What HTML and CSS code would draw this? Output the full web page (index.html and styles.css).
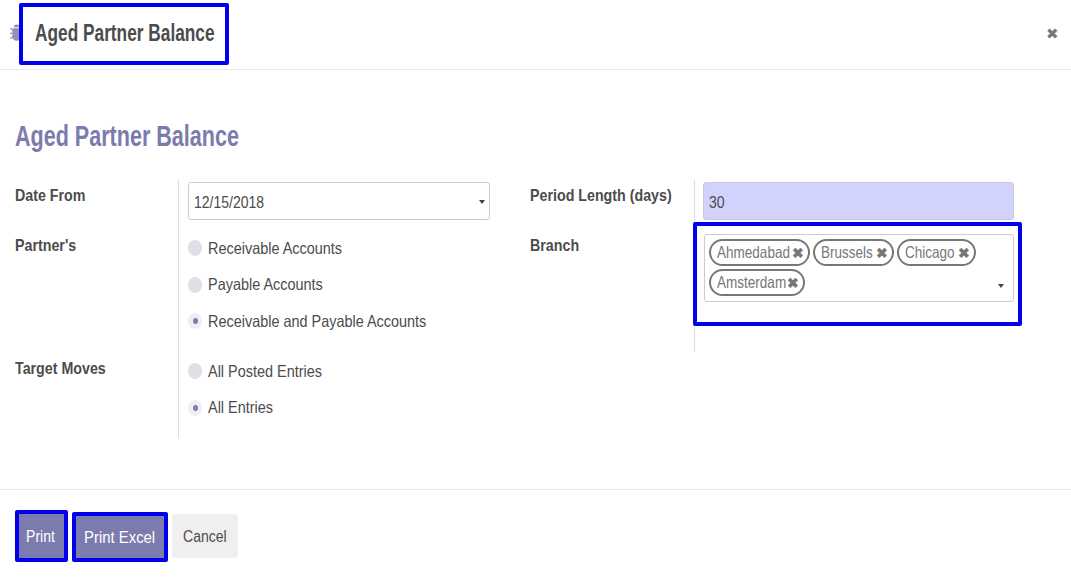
FILE: index.html
```html
<!DOCTYPE html>
<html lang="en">
<head>
    <meta charset="UTF-8">
    <meta name="viewport" content="width=device-width, initial-scale=1.0">
    <title>Aged Partner Balance</title>
    <link rel="stylesheet" href="styles.css">
</head>
<body>
    <header class="modal-header">
        <svg class="bug" viewBox="0 0 14 18" aria-hidden="true">
            <path d="M4 4a3 3 0 0 1 6 0zM3.500 5h7l1 1.500v7.500a4.500 4.500 0 0 1-9 0v-7.500z"/>
            <path class="legs" d="M3 7L0.500 5M11 7l2.500-2M2.500 10.500H0M11.500 10.500H14M3 14l-2.500 2M11 14l2.500 2"/>
        </svg>
        <div class="mark title-mark"><h4 class="modal-title">Aged Partner Balance</h4></div>
        <span class="close">&#10006;</span>
    </header>

    <main class="modal-body">
        <h1 class="form-title"><span>Aged Partner Balance</span></h1>
        <div class="form-columns">
            <div class="group group-left">
                <div class="row row-date">
                    <label class="field-label"><span class="sq">Date From</span></label>
                    <div class="field">
                        <div class="input input-date"><span class="sq">12/15/2018</span><span class="caret caret-date"></span></div>
                    </div>
                </div>
                <div class="row row-partner">
                    <label class="field-label"><span class="sq">Partner's</span></label>
                    <div class="field">
                        <div class="radio"><span class="dot"></span><span class="sq">Receivable Accounts</span></div>
                        <div class="radio"><span class="dot"></span><span class="sq">Payable Accounts</span></div>
                        <div class="radio"><span class="dot on"></span><span class="sq">Receivable and Payable Accounts</span></div>
                    </div>
                </div>
                <div class="row row-moves">
                    <label class="field-label"><span class="sq">Target Moves</span></label>
                    <div class="field">
                        <div class="radio"><span class="dot"></span><span class="sq">All Posted Entries</span></div>
                        <div class="radio"><span class="dot on"></span><span class="sq">All Entries</span></div>
                    </div>
                </div>
            </div>

            <div class="group group-right">
                <div class="row row-period">
                    <label class="field-label"><span class="sq">Period Length (days)</span></label>
                    <div class="field">
                        <div class="input input-required"><span class="sq">30</span></div>
                    </div>
                </div>
                <div class="row row-branch">
                    <label class="field-label"><span class="sq">Branch</span></label>
                    <div class="field">
                        <div class="mark branch-mark">
                            <div class="tags-input">
                                <span class="tag tag-ahmedabad"><span class="sq">Ahmedabad</span><b>&#10006;</b></span>
                                <span class="tag tag-brussels"><span class="sq">Brussels</span><b>&#10006;</b></span>
                                <span class="tag tag-chicago"><span class="sq">Chicago</span><b>&#10006;</b></span>
                                <span class="tag tag-amsterdam"><span class="sq">Amsterdam</span><b>&#10006;</b></span>
                                <span class="caret caret-tags"></span>
                            </div>
                        </div>
                    </div>
                </div>
            </div>
        </div>
    </main>

    <footer class="modal-footer">
        <div class="mark"><button class="btn btn-primary btn-print"><span class="sq">Print</span></button></div>
        <div class="mark"><button class="btn btn-primary btn-excel"><span class="sq">Print Excel</span></button></div>
        <button class="btn btn-cancel"><span class="sq">Cancel</span></button>
    </footer>
</body>
</html>
```

FILE: styles.css
```css
html, body {
    margin: 0;
    height: 588px;
    overflow: hidden;
    background-color: #fff;
    font-family: "Liberation Sans", Arial, sans-serif;
    font-size: 16.500px;
    color: #4c4c4c;
}

/* text in this dialog is narrower than the font */
.sq {
    display: inline-block;
    flex: none;
    white-space: nowrap;
    transform: scaleX(0.875);
    transform-origin: left center;
}

.mark {
    border: 4px solid #0000ee;
    border-radius: 2px;
    box-sizing: border-box;
}

.modal-header {
    display: flex;
    align-items: flex-start;
    height: 70px;
    box-sizing: border-box;
    border-bottom: 1px solid #e8e8e8;
    padding-left: 10px;
    padding-top: 3px;
}

.bug {
    width: 13px;
    height: 18px;
    flex: none;
    margin-top: 20px;
    fill: #9090b8;
}

.bug .legs {
    fill: none;
    stroke: #9090b8;
    stroke-width: 1.500;
}

.title-mark {
    width: 210px;
    height: 62px;
    margin-left: -4px;
    padding: 0 0 2px 12px;
    background-color: #fff;
    display: flex;
    align-items: center;
}

.modal-title {
    margin: 0;
    font-size: 24px;
    font-weight: bold;
    white-space: nowrap;
    transform: scaleX(0.72);
    transform-origin: left center;
}

.close {
    margin-left: auto;
    margin-right: 12px;
    margin-top: 22px;
    font-size: 15px;
    color: #777;
}

.modal-body {
    height: 419px;
    padding: 0 15px;
}

.form-title {
    margin: 0;
    height: 110px;
    box-sizing: border-box;
    padding-top: 50px;
    font-size: 29px;
    line-height: 32px;
    font-weight: bold;
    color: #7c7bad;
}

.form-title span {
    display: inline-block;
    white-space: nowrap;
    transform: scaleX(0.743);
    transform-origin: left center;
}

.form-columns {
    display: flex;
}

.group-left {
    width: 515px;
}

.row {
    display: flex;
}

.field-label {
    width: 163px;
    flex: none;
    padding-top: 5px;
    line-height: 20px;
    font-weight: bold;
    font-size: 16.300px;
}

.field {
    flex: 1;
    border-left: 1px solid #dcdcdc;
    padding-left: 9px;
}

.row-date {
    height: 50px;
}

.row-partner {
    height: 123px;
}

.row-moves {
    height: 85px;
}

.row-period {
    height: 42px;
}

.row-branch {
    height: 130px;
}

.row-branch .field-label {
    padding-top: 13px;
}

.group-right .field-label {
    width: 164px;
}

.group-right .field {
    padding-left: 8px;
}

.input {
    position: relative;
    box-sizing: border-box;
    height: 38px;
    margin-top: 2px;
    padding-left: 5px;
    line-height: 39px;
    font-size: 16px;
    border: 1px solid #ccc;
    border-radius: 3px;
}

.input-date {
    width: 302px;
}

.input-required {
    width: 311px;
    background-color: #d2d2ff;
}

.caret {
    position: absolute;
    border-top: 4px solid #444;
    border-left: 3px solid transparent;
    border-right: 3px solid transparent;
}

.caret-date {
    right: 4px;
    top: 17px;
}

.caret-tags {
    right: 9px;
    bottom: 13px;
}

.radio {
    display: flex;
    align-items: center;
    height: 36.500px;
}

.dot {
    width: 14px;
    height: 16px;
    flex: none;
    border-radius: 50%;
    background-color: #dee0e6;
    margin-right: 6px;
    display: flex;
    align-items: center;
    justify-content: center;
}

.dot.on {
    background-color: #eeeff3;
}

.dot.on::after {
    content: "";
    width: 5px;
    height: 6px;
    border-radius: 50%;
    background-color: #7c7bad;
}

.branch-mark {
    width: 329px;
    height: 104px;
    margin-left: -10px;
    padding: 8px 0 0 7px;
}

.tags-input {
    position: relative;
    box-sizing: border-box;
    height: 68px;
    width: 310px;
    border: 1px solid #ccc;
    border-radius: 3px;
    padding: 4px 4px 0;
    display: flex;
    flex-wrap: wrap;
    gap: 3px;
    align-content: flex-start;
}

.tag {
    display: flex;
    align-items: center;
    justify-content: space-between;
    box-sizing: border-box;
    height: 27px;
    padding: 0 4px 0 6px;
    border: 2px solid #777;
    border-radius: 14px;
    color: #777;
    font-size: 16.500px;
    overflow: hidden;
}

.tag b {
    font-size: 13.500px;
    flex: none;
}

.tag .sq {
    width: 0;
    transform: scaleX(0.82);
}

.tag-ahmedabad {
    width: 101px;
}

.tag-brussels {
    width: 81px;
}

.tag-chicago {
    width: 79px;
}

.tag-amsterdam {
    width: 96px;
}

.modal-footer {
    border-top: 1px solid #e8e8e8;
    display: flex;
    align-items: flex-end;
    gap: 4px;
    padding: 20px 0 0 15px;
}

.btn {
    display: flex;
    align-items: center;
    justify-content: center;
    border: none;
    margin: 0;
    padding: 0;
    font-family: inherit;
    font-size: 16px;
    cursor: pointer;
}

.btn .sq {
    transform-origin: center;
    padding-top: 2px;
}

.btn-primary {
    background-color: #7c7bad;
    color: #fff;
}

.btn-print {
    width: 45px;
    height: 44px;
    padding-right: 2px;
}

.btn-excel {
    width: 88px;
    height: 42px;
    font-size: 17px;
}

.btn-cancel {
    width: 66px;
    height: 44px;
    margin-bottom: 4px;
    border-radius: 3px;
    background-color: #f0eeee;
    color: #4c4c4c;
}
```
